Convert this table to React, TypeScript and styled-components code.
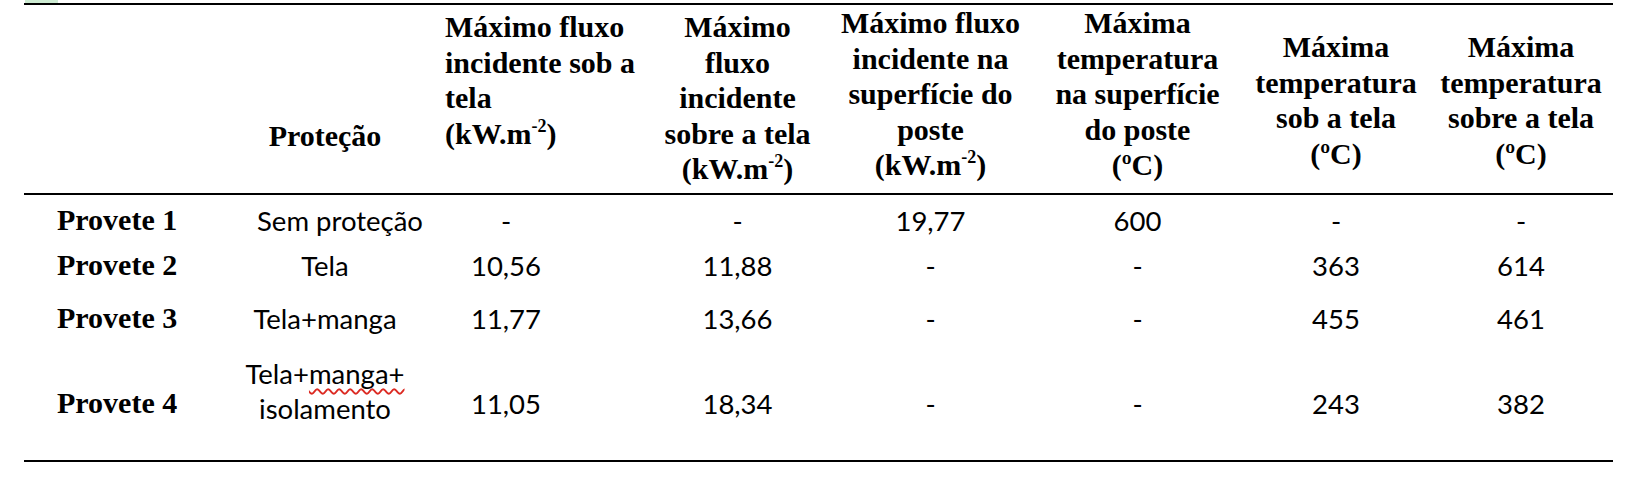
import React from 'react';
import styled, { createGlobalStyle } from 'styled-components';

const GlobalStyle = createGlobalStyle`
  html, body {
    margin: 0;
    padding: 0;
    background: #ffffff;
  }
  body {
    width: 1640px;
    height: 500px;
    overflow: hidden;
  }
`;

const Page = styled.div`
  width: 1589px;
  padding-left: 24px;
`;

// bit of a cell highlight left over above the table
const SelectionMark = styled.div`
  width: 33px;
  height: 3px;
  margin-left: 1px;
  background: #cdebd2;
`;

const Table = styled.div`
  border-top: 2px solid #000;
  border-bottom: 2px solid #000;
  padding-bottom: 32px;
  color: #000;
`;

const Row = styled.div<{ $height: number }>`
  display: grid;
  grid-template-columns: 196px 210px 152px 251px 201px 203px 192px 184px;
  height: ${({ $height }) => $height}px;
  align-items: end;
`;

const HeadRow = styled(Row)`
  align-items: start;
  border-bottom: 2px solid #000;
`;

const shiftPadding = (shift: number) => `
  padding-left: ${Math.max(0, shift * 2)}px;
  padding-right: ${Math.max(0, -shift * 2)}px;
`;

const HeadCell = styled.div<{ $top: number; $shift?: number; $left?: boolean }>`
  font-family: 'Liberation Serif', 'Times New Roman', serif;
  font-weight: 700;
  font-size: 30px;
  line-height: 35.5px;
  white-space: nowrap;
  padding-top: ${({ $top }) => $top}px;
  text-align: ${({ $left }) => ($left ? 'left' : 'center')};
  ${({ $shift = 0, $left }) => ($left ? 'padding-left: 15px;' : shiftPadding($shift))}

  sup {
    font-size: 18px;
    line-height: 0;
    vertical-align: 12px;
  }
`;

const Label = styled.div<{ $lift: number }>`
  font-family: 'Liberation Serif', 'Times New Roman', serif;
  font-weight: 700;
  font-size: 30px;
  line-height: 36px;
  padding-left: 33px;
  padding-bottom: ${({ $lift }) => $lift}px;
  white-space: nowrap;
`;

const Value = styled.div<{ $shift?: number; $lift: number }>`
  font-family: Lato, 'Noto Sans', sans-serif;
  font-size: 27.5px;
  line-height: 35px;
  text-align: center;
  white-space: nowrap;
  padding-bottom: ${({ $lift }) => $lift}px;
  ${({ $shift = 0 }) => shiftPadding($shift)}
`;

const Misspelled = styled.span`
  text-decoration: underline wavy #dc2a22;
  text-decoration-thickness: 1.5px;
  text-underline-offset: 4px;
  text-decoration-skip-ink: none;
`;

const kw = (
  <>
    (kW.m<sup>-2</sup>)
  </>
);

// horizontal nudge of each column's centre, in px
const shifts = [0, 0, 0, 30, -3, 2, 3, 0];

interface DataRow {
  label: string;
  protection: React.ReactNode;
  protectionShift?: number;
  values: string[];
  height: number;
  lift?: number;
  protectionLift?: number;
}

const rows: DataRow[] = [
  {
    label: 'Provete 1',
    protection: 'Sem proteção',
    protectionShift: 15,
    values: ['-', '-', '19,77', '600', '-', '-'],
    height: 43,
  },
  {
    label: 'Provete 2',
    protection: 'Tela',
    values: ['10,56', '11,88', '-', '-', '363', '614'],
    height: 45,
  },
  {
    label: 'Provete 3',
    protection: 'Tela+manga',
    values: ['11,77', '13,66', '-', '-', '455', '461'],
    height: 53,
  },
  {
    label: 'Provete 4',
    protection: (
      <>
        Tela+<Misspelled>manga+</Misspelled>
        <br />
        isolamento
      </>
    ),
    values: ['11,05', '18,34', '-', '-', '243', '382'],
    height: 92,
    lift: 7,
    protectionLift: 2,
  },
];

export default function App() {
  return (
    <Page>
      <GlobalStyle />
      <SelectionMark />
      <Table>
        <HeadRow $height={188}>
          <div />
          <HeadCell $top={113}>Proteção</HeadCell>
          <HeadCell $top={4} $left>
            Máximo fluxo
            <br />
            incidente sob a
            <br />
            tela
            <br />
            {kw}
          </HeadCell>
          <HeadCell $top={4} $shift={shifts[3]}>
            Máximo
            <br />
            fluxo
            <br />
            incidente
            <br />
            sobre a tela
            <br />
            {kw}
          </HeadCell>
          <HeadCell $top={0} $shift={shifts[4]}>
            Máximo fluxo
            <br />
            incidente na
            <br />
            superfície do
            <br />
            poste
            <br />
            {kw}
          </HeadCell>
          <HeadCell $top={0} $shift={shifts[5]}>
            Máxima
            <br />
            temperatura
            <br />
            na superfície
            <br />
            do poste
            <br />
            (ºC)
          </HeadCell>
          <HeadCell $top={24} $shift={shifts[6]}>
            Máxima
            <br />
            temperatura
            <br />
            sob a tela
            <br />
            (ºC)
          </HeadCell>
          <HeadCell $top={24} $shift={shifts[7]}>
            Máxima
            <br />
            temperatura
            <br />
            sobre a tela
            <br />
            (ºC)
          </HeadCell>
        </HeadRow>

        {rows.map((row) => (
          <Row key={row.label} $height={row.height}>
            <Label $lift={row.lift ?? 0}>{row.label}</Label>
            <Value
              $shift={row.protectionShift ?? shifts[1]}
              $lift={row.protectionLift ?? row.lift ?? 0}
            >
              {row.protection}
            </Value>
            {row.values.map((v, i) => (
              <Value key={i} $shift={shifts[i + 2]} $lift={row.lift ?? 0}>
                {v}
              </Value>
            ))}
          </Row>
        ))}
      </Table>
    </Page>
  );
}
